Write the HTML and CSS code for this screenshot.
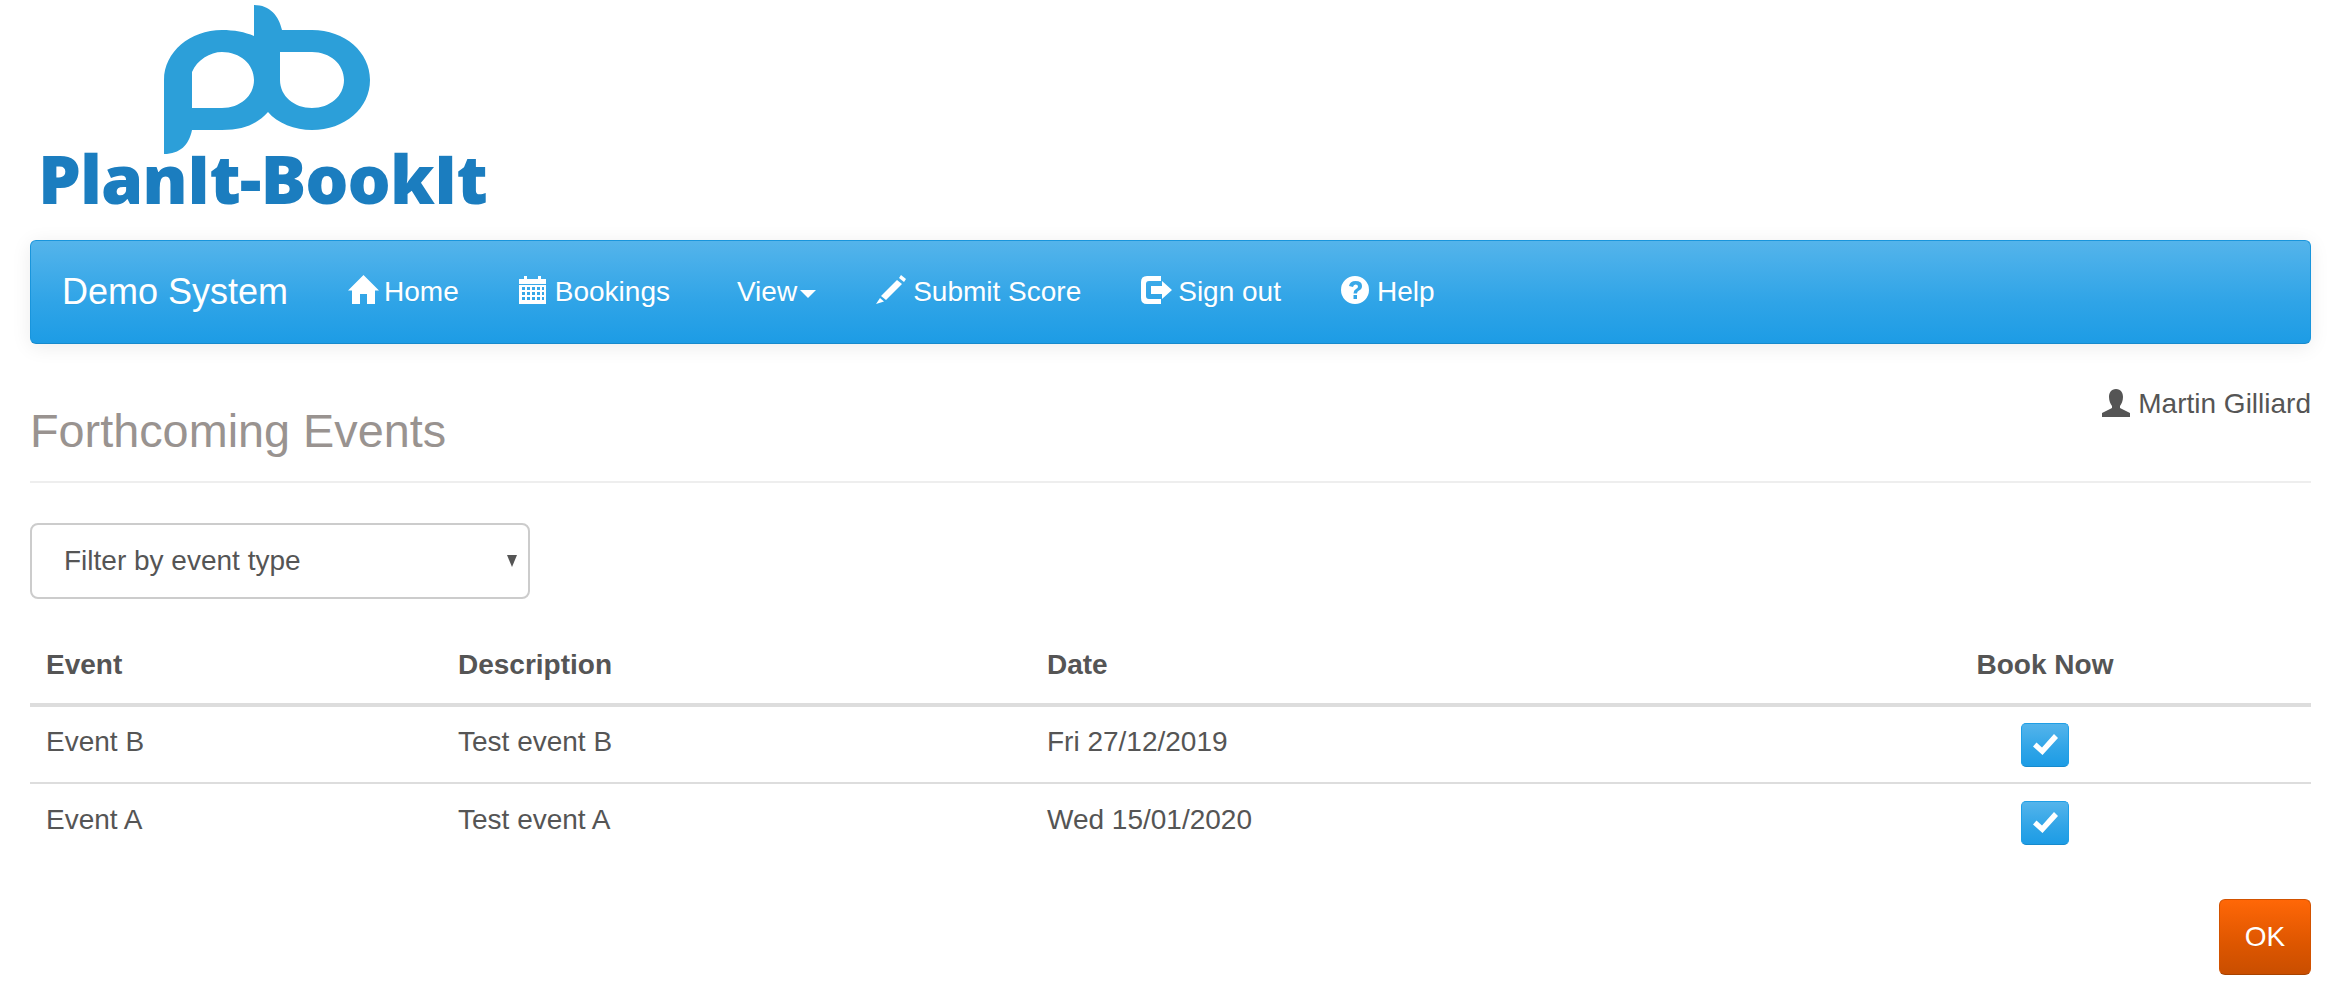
FILE: index.html
```html
<!DOCTYPE html>
<html lang="en">
<head>
<meta charset="utf-8">
<title>Forthcoming Events</title>
<link rel="stylesheet" href="styles.css">
</head>
<body>
<div class="page">
  <header class="logo">
    <svg class="logo-mark" viewBox="0 0 208 152" width="208" height="152" aria-hidden="true">
      <path fill-rule="evenodd" d="M90 0C106 0 115 11 118 25L148 25C181 25 206 47 206 75C206 103 181 125 148 125C131 125 113 118 104 107C94 118 81 125 58 125L28 125C25 140 16 149 0 149L0 75C0 47 26 25 58 25C70 25 81 27 90 31ZM28 103L28 67C33 55 46 47 58 47C76 47 90 59 90 75C90 91 76 103 58 103ZM116 47L148 47C166 47 180 59 180 75C180 91 166 103 148 103C130 103 116 91 116 75Z"/>
    </svg>
    <div class="logo-text">PlanIt-BookIt</div>
  </header>

  <nav class="navbar">
    <a class="brand">Demo System</a>
    <a class="nav-item">
      <svg class="icon icon-home" viewBox="0 0 31 29" aria-hidden="true"><path d="M15.5 0L31 15.5L27 15.5L27 29L19 29L19 19L12 19L12 29L4 29L4 15.5L0 15.5Z"/></svg>
      <span>Home</span>
    </a>
    <a class="nav-item nav-item-wide">
      <svg class="icon icon-cal" viewBox="0 0 27 28" aria-hidden="true"><path fill-rule="evenodd" d="M5 0H8V3H19V0H22V3H27V28H0V3H5ZM0 8V9H27V8ZM3 11V14H6V11ZM8 11V14H11V11ZM13 11V14H16V11ZM18 11V14H21V11ZM23 11V14H25V11ZM3 16V19H6V16ZM8 16V19H11V16ZM13 16V19H16V16ZM18 16V19H21V16ZM23 16V19H25V16ZM3 21V24H6V21ZM8 21V24H11V21ZM13 21V24H16V21ZM18 21V24H21V21ZM23 21V24H25V21Z"/></svg>
      <span>Bookings</span>
    </a>
    <a class="nav-item nav-item-view">
      <span>View</span><i class="caret"></i>
    </a>
    <a class="nav-item">
      <svg class="icon icon-pen" viewBox="0 0 30 29" aria-hidden="true"><path d="M25 0L30 4L28 7L23 3ZM21 5L26 9L10 25L5 21ZM4 23L8 26.5L0 29Z"/></svg>
      <span>Submit Score</span>
    </a>
    <a class="nav-item">
      <svg class="icon icon-out" viewBox="0 0 31 28" aria-hidden="true"><path fill-rule="evenodd" d="M6 0H20V5H8Q5 5 5 8V20Q5 23 8 23H20V28H6Q0 28 0 22V6Q0 0 6 0ZM21 5L31 14L21 23V18H10V10H21Z"/></svg>
      <span>Sign out</span>
    </a>
    <a class="nav-item">
      <svg class="icon icon-help" viewBox="0 0 28 28" aria-hidden="true"><path fill-rule="evenodd" d="M14 0A14 14 0 1 1 14 28A14 14 0 1 1 14 0ZM8 10L12 11Q12.500 8.500 14.500 8.500Q17 8.500 17 10.500Q17 12 15 13Q12.500 14.300 12.500 17.500H16Q16 15.500 18 14.500Q21 13 21 10Q21 5 14.500 5Q9 5 8 10ZM12.500 19V23H16V19Z"/></svg>
      <span>Help</span>
    </a>
  </nav>

  <section class="page-head">
    <h1 class="title">Forthcoming Events</h1>
    <div class="user">
      <svg class="icon-user" viewBox="0 0 28 28" aria-hidden="true"><path d="M14 0C19 0 21 4 21 8C21 12 19.500 15 18 17V19L28 24V28H0V24L10 19V17C8.500 15 7 12 7 8C7 4 9 0 14 0Z"/></svg>
      <span>Martin Gilliard</span>
    </div>
  </section>

  <div class="filter">
    <select class="filter-select"><option>Filter by event type</option></select>
    <i class="filter-arrow"></i>
  </div>

  <table class="events">
    <colgroup>
      <col class="col-event"><col class="col-desc"><col class="col-date"><col class="col-book">
    </colgroup>
    <thead>
      <tr><th>Event</th><th>Description</th><th>Date</th><th class="center">Book Now</th></tr>
    </thead>
    <tbody>
      <tr>
        <td>Event B</td><td>Test event B</td><td>Fri 27/12/2019</td>
        <td class="center"><button class="btn-book" aria-label="Book Event B"><svg class="icon-ok" viewBox="0 0 25 21" aria-hidden="true"><path d="M21 0L25 4L9.500 21L0 12.500L3.500 8.500L9 13.500Z"/></svg></button></td>
      </tr>
      <tr>
        <td>Event A</td><td>Test event A</td><td>Wed 15/01/2020</td>
        <td class="center"><button class="btn-book" aria-label="Book Event A"><svg class="icon-ok" viewBox="0 0 25 21" aria-hidden="true"><path d="M21 0L25 4L9.500 21L0 12.500L3.500 8.500L9 13.500Z"/></svg></button></td>
      </tr>
    </tbody>
  </table>

  <div class="actions"><button class="btn-ok">OK</button></div>
</div>
</body>
</html>
```

FILE: styles.css
```css
* { box-sizing: border-box; }
html, body { margin: 0; padding: 0; background: #fff; }
body {
  font-family: "Liberation Sans", Arial, sans-serif;
  font-size: 28px;
  line-height: 40px;
  color: #555;
}
.page { padding: 0 35px 0 30px; }

/* logo */
.logo { height: 240px; padding-top: 5px; }
.logo-mark { display: block; margin-left: 134px; fill: #2c9fd9; }
.logo-text {
  margin-left: 8px;
  margin-top: -13px;
  font-family: "Open Sans", sans-serif;
  font-weight: 800;
  font-size: 68px;
  line-height: 68px;
  letter-spacing: -1px;
  color: #1b7dbf;
  white-space: nowrap;
}

/* navbar */
.navbar {
  display: flex;
  align-items: center;
  height: 104px;
  padding-left: 31px;
  border: 1px solid #1995dc;
  border-bottom-color: #178acc;
  border-radius: 6px;
  background: linear-gradient(#54b4eb, #2fa4e7 60%, #1d9ce5);
  box-shadow: 0 3px 20px rgba(0, 0, 0, .08);
  color: #fff;
  text-shadow: 0 1px 0 rgba(0, 0, 0, .05);
}
.brand { font-size: 36px; margin-right: 30px; }
.nav-item { display: flex; align-items: center; padding: 0 30px; white-space: nowrap; }
.nav-item-wide { padding-right: 37px; }
.icon { display: block; fill: #fff; margin-right: 6px; margin-top: -5px; }
.icon-home { width: 31px; height: 29px; margin-right: 5px; }
.icon-cal { width: 27px; height: 28px; margin-right: 9px; }
.icon-pen { width: 30px; height: 29px; margin-right: 7px; }
.icon-out { width: 31px; height: 28px; }
.icon-help { width: 28px; height: 28px; margin-right: 8px; }
.caret {
  display: block;
  margin-left: 3px;
  margin-top: 3px;
  border-top: 8px solid #fff;
  border-left: 8px solid transparent;
  border-right: 8px solid transparent;
}

/* heading */
.page-head {
  display: flex;
  justify-content: space-between;
  height: 139px;
  border-bottom: 2px solid #eee;
}
.title {
  margin: 60px 0 0;
  font-size: 46.8px;
  line-height: 54px;
  font-weight: 400;
  color: #999390;
}
.user { display: flex; align-items: center; height: 40px; margin-top: 40px; }
.icon-user { width: 28px; height: 28px; fill: #555; margin-right: 8px; margin-top: -3px; display: block; }

/* filter */
.filter { position: relative; width: 500px; margin-top: 40px; }
.filter-select {
  display: block;
  width: 100%;
  height: 76px;
  padding: 0 32px;
  border: 2px solid #ccc;
  border-radius: 8px;
  background: #fff;
  font: inherit;
  color: #555;
  appearance: none;
  -webkit-appearance: none;
}
.filter-arrow {
  position: absolute;
  right: 13px;
  top: 32px;
  border-top: 12px solid #555;
  border-left: 5.5px solid transparent;
  border-right: 5.5px solid transparent;
}

/* table */
.events { width: 2281px; margin-top: 24px; border-collapse: collapse; table-layout: fixed; }
.col-event { width: 412px; }
.col-desc { width: 589px; }
.col-date { width: 748px; }
.col-book { width: 532px; }
.events th, .events td { padding: 0 16px; text-align: left; vertical-align: middle; }
.events th { height: 82px; padding-top: 4px; font-weight: 700; border-bottom: 4px solid #ddd; }
.events td { height: 78px; padding-bottom: 5px; border-bottom: 2px solid #ddd; }
.events td.center { padding-bottom: 0; }
.events tbody tr:last-child td { border-bottom: 0; }
.events .center { text-align: center; }
.btn-book {
  display: inline-flex;
  align-items: center;
  justify-content: center;
  width: 48px;
  height: 44px;
  padding: 0;
  border: 1px solid #1f9fe6;
  border-bottom-color: #178acc;
  border-radius: 5px;
  background: linear-gradient(#54b4eb, #2fa4e7 60%, #1d9ce5);
  vertical-align: middle;
}
.icon-ok { width: 25px; height: 21px; fill: #fff; display: block; }

/* actions */
.actions { display: flex; justify-content: flex-end; margin-top: 38px; }
.btn-ok {
  width: 92px;
  height: 76px;
  padding: 0;
  border: 1px solid #d25200;
  border-bottom-color: #a84300;
  border-radius: 6px;
  background: linear-gradient(#ff6707, #dd5600 60%, #c94e00);
  color: #fff;
  font: inherit;
  text-shadow: 0 1px 0 rgba(0, 0, 0, .05);
}
```
